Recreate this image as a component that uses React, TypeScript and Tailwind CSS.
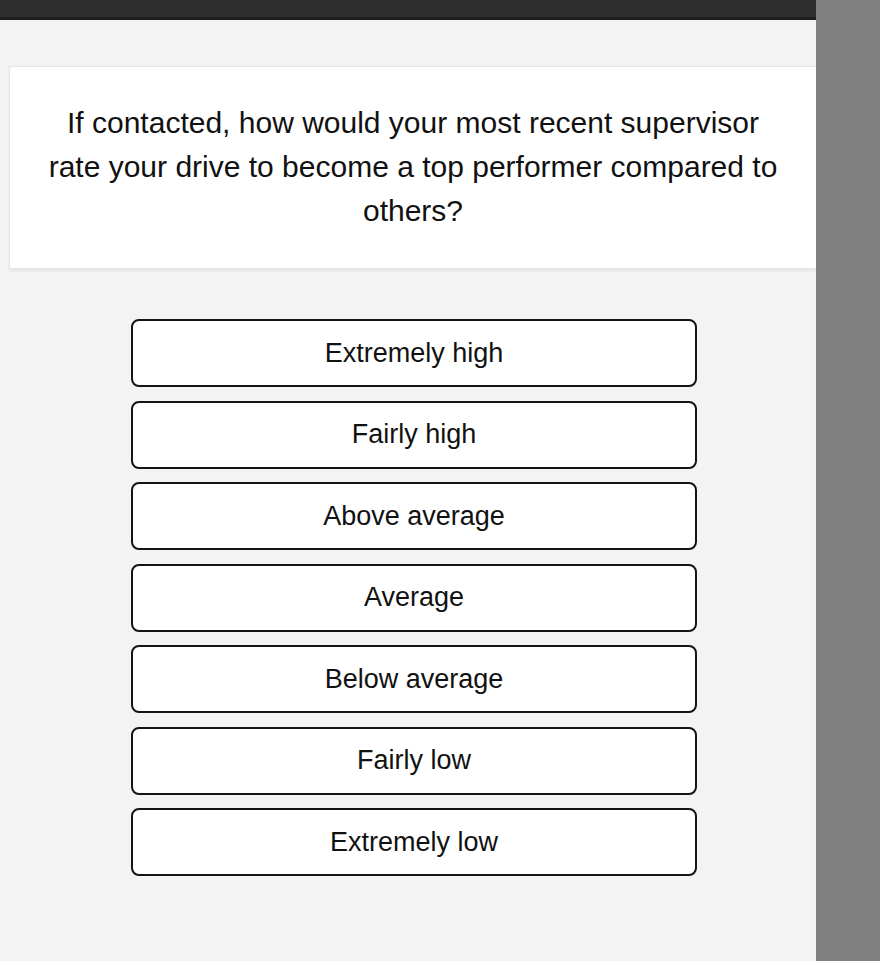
const options = [
  'Extremely high',
  'Fairly high',
  'Above average',
  'Average',
  'Below average',
  'Fairly low',
  'Extremely low',
];

export default function App() {
  return (
    <div className="flex min-h-[961px] w-full bg-[#f3f3f3] font-['Liberation_Sans',Arial,sans-serif] text-[#111]">
      <main className="flex min-w-0 flex-1 flex-col overflow-hidden">
        <div className="h-[17px] bg-[#2d2d2d]" />
        <div className="h-[3px] bg-[#1e1e1e]" />

        <section className="ml-[9px] mt-[46px] border border-r-0 border-[#e6e6e6] bg-white px-[30px] pb-[35px] pt-[34px] shadow-[0_2px_3px_rgba(0,0,0,0.06)]">
          <p className="mx-auto max-w-[738px] text-center text-[30px] leading-[44px]">
            If contacted, how would your most recent supervisor rate your drive to become a top performer compared to
            others?
          </p>
        </section>

        <div className="ml-[131px] mt-[50px] flex w-[566px] flex-col gap-[13.5px]">
          {options.map((label) => (
            <button
              key={label}
              type="button"
              className="flex h-[68px] items-center justify-center rounded-[8px] border-2 border-[#141414] bg-white text-[27px] text-[#111]"
            >
              {label}
            </button>
          ))}
        </div>
      </main>
      <aside className="w-[64px] shrink-0 bg-[#808080]" />
    </div>
  );
}
